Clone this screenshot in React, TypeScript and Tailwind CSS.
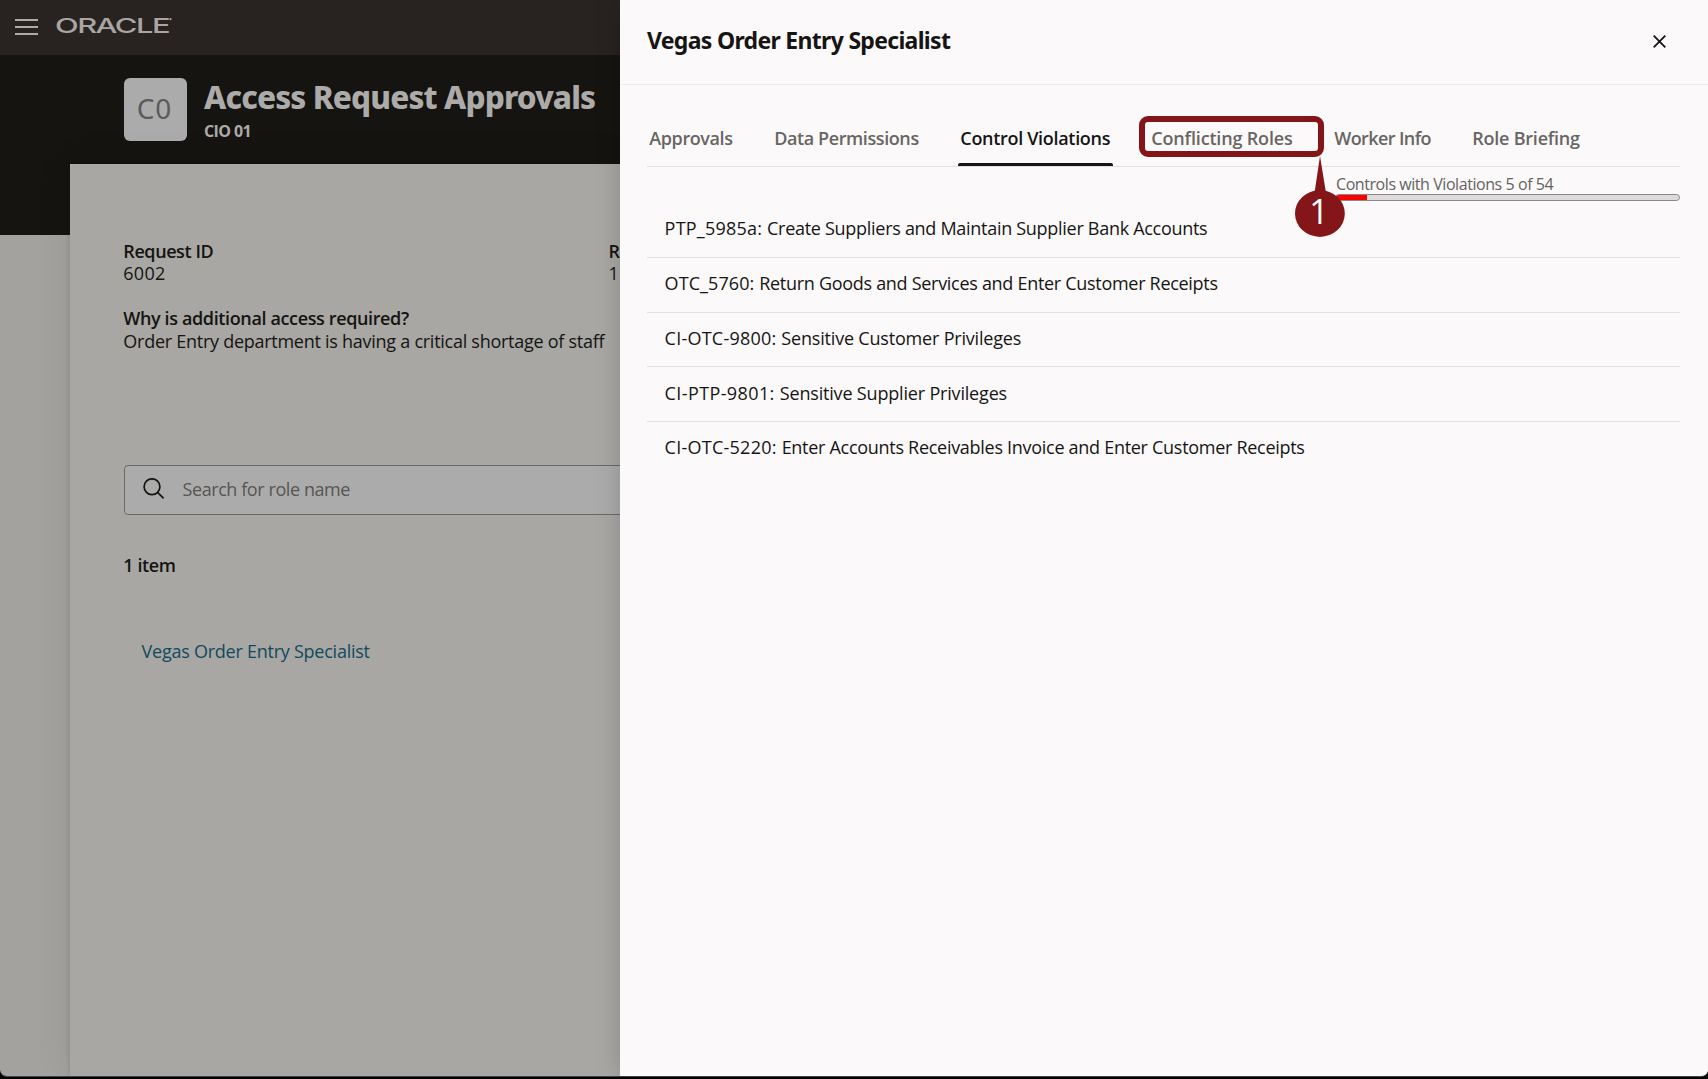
const FONT = "font-['Open_Sans',sans-serif]";

const controls = [
  { code: 'PTP_5985a:', name: 'Create Suppliers and Maintain Supplier Bank Accounts', codeTracking: 'tracking-[0.22px]', nameTracking: 'tracking-[-0.29px]' },
  { code: 'OTC_5760:', name: 'Return Goods and Services and Enter Customer Receipts', codeTracking: 'tracking-[0.09px]', nameTracking: 'tracking-[-0.295px]' },
  { code: 'CI-OTC-9800:', name: 'Sensitive Customer Privileges', codeTracking: 'tracking-[0.23px]', nameTracking: 'tracking-[-0.19px]' },
  { code: 'CI-PTP-9801:', name: 'Sensitive Supplier Privileges', codeTracking: 'tracking-[0.39px]', nameTracking: 'tracking-[-0.18px]' },
  { code: 'CI-OTC-5220:', name: 'Enter Accounts Receivables Invoice and Enter Customer Receipts', codeTracking: 'tracking-[0.25px]', nameTracking: 'tracking-[-0.288px]' },
];

const tabs = [
  { label: 'Approvals', box: 'w-[89px] tracking-[-0.4px]' },
  { label: 'Data Permissions', box: 'w-[150px] tracking-[-0.41px]' },
  { label: 'Control Violations', box: 'w-[155px] tracking-[-0.31px]', active: true },
  { label: 'Conflicting Roles', box: 'w-[147px] tracking-[-0.17px]', marked: true },
  { label: 'Worker Info', box: 'w-[102px] tracking-[-0.61px]' },
  { label: 'Role Briefing', box: 'w-[113px] tracking-[-0.23px]' },
];

function Header() {
  return (
    <header className="flex h-[55px] items-start bg-[#282320] pl-[15px]">
      <div className="mt-[19px] flex w-[23px] flex-col gap-[5px]">
        <span className="h-[2px] bg-[#aeaaa7]" />
        <span className="h-[2px] bg-[#aeaaa7]" />
        <span className="h-[2px] bg-[#aeaaa7]" />
      </div>
      <svg className="ml-[17px] mt-[14px]" width="120" height="24" viewBox="0 0 120 24" fill="#a9a5a2">
        <text x="0" y="18.6" textLength="114" lengthAdjust="spacingAndGlyphs" letterSpacing="-1" fontFamily="Inter, sans-serif" fontSize="20" fontWeight="500">
          ORACLE
        </text>
        <circle cx="115.5" cy="5.2" r="1.1" />
      </svg>
    </header>
  );
}

function Hero() {
  return (
    <div className="flex h-[180px] items-start bg-[#151411] pl-[124px]">
      <div className="mt-[23px] flex h-[63px] w-[63px] items-center justify-center rounded-[6px] bg-[#acabab] pb-[4px] pr-[2px] font-['Noto_Sans',sans-serif] text-[28px] tracking-[1px] text-[#5b5a59]">
        C0
      </div>
      <div className="ml-[17px] mt-[22px] whitespace-nowrap text-[#acaba9]">
        <h1 className="font-['Noto_Sans',sans-serif] text-[31.5px] font-extrabold leading-[39px] tracking-[-0.87px]">Access Request Approvals</h1>
        <p className="mt-[3px] text-base font-bold leading-6 tracking-[-0.6px]">CIO 01</p>
      </div>
    </div>
  );
}

function RequestCard() {
  return (
    <main className="relative -mt-[71px] ml-[70px] h-[912px] bg-[#a8a7a4] pl-[54px] pt-[76px] text-lg leading-[22.5px] text-[#151411] shadow-[0_0_5px_rgba(0,0,0,0.15),0_0_36px_rgba(0,0,0,0.08)]">
      <div className="-ml-[0.7px] flex whitespace-nowrap">
        <div className="w-[485.2px]">
          <p className="font-semibold leading-[22px] tracking-[-0.42px]">Request ID</p>
          <p className="leading-[22px] tracking-[0.25px]">6002</p>
        </div>
        <div>
          <p className="font-semibold leading-[22px]">Requested On</p>
          <p className="leading-[22px]">1</p>
        </div>
      </div>
      <div className="-ml-[0.7px] mt-[23px] whitespace-nowrap">
        <p className="font-semibold tracking-[-0.37px]">Why is additional access required?</p>
        <p className="tracking-[-0.265px]">Order Entry department is having a critical shortage of staff</p>
      </div>
      <div className="mt-[113px] flex h-[50px] items-center rounded-[4px] border border-[#6b6a68] bg-[#acabab] pb-[2px]">
        <svg className="ml-[18px]" width="22" height="22" viewBox="0 0 22 22" fill="none" stroke="#151411" strokeWidth="1.7">
          <circle cx="9" cy="8.7" r="7.9" />
          <path d="M14.6 14.3L20.6 20.3" />
        </svg>
        <span className="ml-[17.5px] tracking-[-0.42px] text-[#565553]">Search for role name</span>
      </div>
      <p className="-ml-[0.7px] mt-[38px] font-semibold leading-6 tracking-[-0.4px]">1 item</p>
      <p className="ml-[17.6px] mt-[62px] leading-6 tracking-[-0.25px] text-[#124a5d]">Vegas Order Entry Specialist</p>
    </main>
  );
}

function Callout() {
  return (
    <>
      <div className="absolute -left-[10px] -top-[10px] h-[41px] w-[185px] rounded-[9px] border-[6px] border-[#841519]" />
      <svg className="absolute left-[146px] top-[30px] z-10" width="52" height="84" viewBox="0 0 52 84" fill="#841519">
        <path d="M25 0L19.5 37H31Z" />
        <ellipse cx="24.9" cy="57.5" rx="24.9" ry="23.4" />
        <text x="24" y="68" textAnchor="middle" fill="#fff" fontFamily="Open Sans, sans-serif" fontSize="34" fontWeight="400">
          1
        </text>
      </svg>
    </>
  );
}

function Drawer() {
  return (
    <aside className="absolute inset-y-0 right-0 w-[1088px] bg-[#fbf9fa] text-[#161513] shadow-[0_0_24px_rgba(0,0,0,0.18)]">
      <div className="flex h-[85px] items-start justify-between border-b border-[#efedee] pl-[27px] pr-[42px] pt-6">
        <h2 className="whitespace-nowrap font-['Noto_Sans',sans-serif] text-[23px] font-bold leading-[33px] tracking-[-0.69px]">Vegas Order Entry Specialist</h2>
        <button aria-label="Close" className="mt-[11px]">
          <svg width="13" height="13" viewBox="0 0 13 13" stroke="#161513" strokeWidth="1.8">
            <path d="M0.7 0.7L12.3 12.3M12.3 0.7L0.7 12.3" />
          </svg>
        </button>
      </div>
      <div className="ml-[27px] mr-[28px]">
        <nav className="flex h-[82px] gap-9 border-b border-[#e1dfe0] pt-[41px] text-lg font-semibold leading-6 text-[#686563]">
          {tabs.map((t) => (
            <div key={t.label} className={`relative flex shrink-0 flex-col justify-between whitespace-nowrap ${t.box} ${t.active ? 'text-[#161513]' : ''}`}>
              <span className="px-[2.3px]">{t.label}</span>
              {t.active && <span className="h-[3px] rounded-t-[2px] bg-[#161513]" />}
              {t.marked && <Callout />}
            </div>
          ))}
        </nav>
        <div className="ml-auto mt-2 w-[345px]">
          <p className="pl-px text-base leading-[19px] tracking-[-0.435px] text-[#65625f]">Controls with Violations 5 of 54</p>
          <div className="flex h-[7px] overflow-hidden rounded-[4px] border border-[#8a8889] bg-[#dddbdc]">
            <span className="-my-px -ml-px w-[32px] bg-[#fb0200]" />
          </div>
        </div>
        <ul className="mt-[2px] text-lg leading-6">
          {controls.map((c) => (
            <li key={c.code} className="h-[54.8px] whitespace-nowrap border-b border-[#e3e1e2] pl-[17.6px] pt-[13.2px] last:border-b-0">
              <span className={c.codeTracking}>{c.code} </span>
              <span className={c.nameTracking}>{c.name}</span>
            </li>
          ))}
        </ul>
      </div>
    </aside>
  );
}

export default function App() {
  return (
    <div className={`h-[1079px] w-[1708px] overflow-hidden bg-black ${FONT}`}>
      <div className="relative h-[1077px] overflow-hidden rounded-b-[7px] border-b border-[#35494b] bg-[#a3a29f]">
        <Header />
        <Hero />
        <RequestCard />
        <Drawer />
      </div>
    </div>
  );
}
